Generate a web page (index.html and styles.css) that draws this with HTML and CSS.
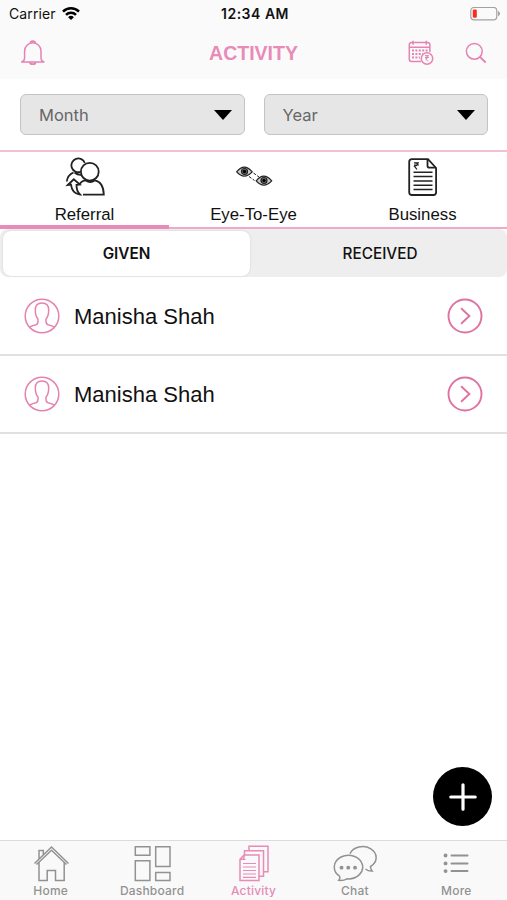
FILE: index.html
```html
<!DOCTYPE html>
<html lang="en">
<head>
  <meta charset="UTF-8" />
  <title>Activity</title>
  <meta name="viewport" content="width=device-width, initial-scale=1" />
  <link rel="stylesheet" href="styles.css">
</head>
<body>

  <header class="top">
    <div class="status-bar">
      <div class="carrier">
        <span>Carrier</span>
        <svg width="18" height="14" viewBox="0 0 18 14" aria-hidden="true">
          <path d="M1 4.600a11.400 11.400 0 0 1 16 0M4 7.800a7 7 0 0 1 10 0" fill="none" stroke="#000" stroke-width="2.500"/>
          <path d="M9 13.100L6.100 10.200a4.100 4.100 0 0 1 5.800 0Z"/>
        </svg>
      </div>
      <strong class="clock">12:34 AM</strong>
      <svg class="battery" width="31" height="14" viewBox="0 0 31 14" aria-hidden="true">
        <rect x=".8" y=".4" width="26" height="12.400" rx="3.400" fill="none" stroke="#a2a2a2" stroke-width="1.200"/>
        <rect x="2.800" y="2.400" width="4" height="8.400" rx="1.200" fill="#fb2b1d"/>
        <path d="M28 3.800q4 2.800 0 5.600Z" fill="#a2a2a2"/>
      </svg>
    </div>

    <div class="title-bar">
      <svg class="bell" width="26" height="26" viewBox="0 0 26 26" aria-hidden="true">
        <path d="M1.200 22q3.400-.6 3.400-4.500v-6.500a8.200 8.200 0 0 1 16.400 0v6.500q0 3.900 3.400 4.500Z"/>
        <path d="M10.500 3.200a2.300 2 0 0 1 4.600 0M10 22.200a2.800 2 0 0 0 5.600 0" stroke-width="1.800"/>
      </svg>
      <h1>ACTIVITY</h1>
      <div class="title-actions">
        <svg width="26" height="26" viewBox="0 0 26 26" aria-hidden="true">
          <path d="M13 21.500H3.500a2.200 2.200 0 0 1-2.200-2.200V4.700a2.200 2.200 0 0 1 2.200-2.200h16.200a2.200 2.200 0 0 1 2.200 2.200V12M1.300 7.300H22M5 .8v4M18.300 .8v4"/>
          <path d="M4 10.500h16M4 14h11M4 17.500h8" stroke-width="2" stroke-dasharray="2 1.400"/>
          <circle cx="19" cy="18.500" r="5.700"/>
          <path d="M17 15.700h4M17 17.500h4M17.500 15.700q3.500.2 2.200 2.200l-2 .8 2 2.700" stroke-width="1"/>
        </svg>
        <svg width="22" height="22" viewBox="0 0 22 22" aria-hidden="true">
          <circle cx="9.300" cy="9.300" r="7.900"/>
          <path d="M15 15l5.700 5.500" stroke-width="1.800"/>
        </svg>
      </div>
    </div>
  </header>

  <main>
    <!-- Filters -->
    <section class="filters">
      <div class="select">
        <span>Month</span>
        <svg width="18" height="10" viewBox="0 0 18 10" aria-hidden="true"><path d="M0 0h18L9 10Z"/></svg>
      </div>
      <div class="select">
        <span>Year</span>
        <svg width="18" height="10" viewBox="0 0 18 10" aria-hidden="true"><path d="M0 0h18L9 10Z"/></svg>
      </div>
    </section>

    <!-- Activity types -->
    <nav class="tabs">
      <a class="tab active">
        <svg width="40" height="40" viewBox="0 0 40 40" aria-hidden="true">
          <circle cx="24.800" cy="14.700" r="8.900"/>
          <path d="M15.500 14.900A6.900 6.900 0 1 1 19.800 6M1.800 24.500Q2.500 18 8.500 15.500M9.500 15.500q3 2.600 7 2.300M14.500 27q3-3.700 6-3.700 4.800 3.400 9.500 0Q38.500 25 38.800 37.700H18"/>
          <path d="M2.800 28l6-5.700 6 5.200-3.300.3q-.2 6.200 3.500 9.700-8-.7-9-9.800Z"/>
        </svg>
        <span>Referral</span>
      </a>
      <a class="tab">
        <svg width="40" height="40" viewBox="0 0 40 40" aria-hidden="true">
          <g id="eye">
            <path d="M2.700 14.800q7.500-9.500 15.500 0-8 8.500-15.500 0Z" fill="#ccc" stroke-width="1.200"/>
            <circle cx="10.500" cy="14.500" r="3" fill="#777" stroke-width="1.200"/>
            <circle cx="10.500" cy="14.500" r="1.700" fill="#000" stroke="none"/>
          </g>
          <use href="#eye" x="19.500" y="9"/>
          <path d="M19.500 16l5.500 4M15 19.500l5.500 4" stroke-width="1" stroke-dasharray="3 1.500"/>
        </svg>
        <span>Eye-To-Eye</span>
      </a>
      <a class="tab">
        <svg width="40" height="40" viewBox="0 0 40 40" aria-hidden="true">
          <path d="M25 2.200H9a2.800 2.800 0 0 0-2.800 2.800v30.200A2.800 2.800 0 0 0 9 38h21.300a2.800 2.800 0 0 0 2.800-2.800V11Z"/>
          <path d="M24.500 2.500v6.200a2 2 0 0 0 2 2H33"/>
          <path d="M10.500 15.300h19M10.500 19.600h19M10.500 23.900h19M10.500 28.200h19M10.500 32.500h19" stroke-width="1.500"/>
          <path d="M11 5.800h5M11 8h5M11.500 5.800q4.500.3 2.100 2.700l-2.200.7 2.600 3.300" stroke-width="1.200"/>
        </svg>
        <span>Business</span>
      </a>
    </nav>

    <div class="segments">
      <button class="segment selected">GIVEN</button>
      <button class="segment">RECEIVED</button>
    </div>

    <ul class="people">
      <li class="person">
        <svg width="36" height="36" viewBox="0 0 36 36" aria-hidden="true">
          <circle cx="18" cy="18" r="16.800"/>
          <path d="M5.500 29.200q2-1.500 6.500-2.500 2.500-.8 2-5.700Q11.300 18 11.300 12q0-7 6.700-7t6.700 7q0 6-2.700 9-.5 4.900 2 5.700 4.500 1 6.500 2.500"/>
        </svg>
        <span class="name">Manisha Shah</span>
        <svg class="go" width="36" height="36" viewBox="0 0 36 36" aria-hidden="true">
          <circle cx="18" cy="18" r="16.500"/>
          <path d="M14.600 10.700l7.800 7.300-7.800 7.300" stroke-linecap="round"/>
        </svg>
      </li>
      <li class="person">
        <svg width="36" height="36" viewBox="0 0 36 36" aria-hidden="true">
          <circle cx="18" cy="18" r="16.800"/>
          <path d="M5.500 29.200q2-1.500 6.500-2.500 2.500-.8 2-5.700Q11.300 18 11.300 12q0-7 6.700-7t6.700 7q0 6-2.700 9-.5 4.900 2 5.700 4.500 1 6.500 2.500"/>
        </svg>
        <span class="name">Manisha Shah</span>
        <svg class="go" width="36" height="36" viewBox="0 0 36 36" aria-hidden="true">
          <circle cx="18" cy="18" r="16.500"/>
          <path d="M14.600 10.700l7.800 7.300-7.800 7.300" stroke-linecap="round"/>
        </svg>
      </li>
    </ul>
  </main>

  <button class="add-btn" aria-label="Add">
    <svg width="28" height="28" viewBox="0 0 28 28"><path d="M14 1.800v24.400M1.800 14h24.400" stroke="#fff" stroke-width="3.200" stroke-linecap="round"/></svg>
  </button>

  <nav class="bottom-nav">
    <a class="nav-item">
      <svg width="44" height="38" viewBox="0 0 44 38" aria-hidden="true">
        <path d="M5.500 19.500L22.500 3l17 16.500M7.500 20.500l15-14.300 15 14.300M10 15V6.500h4.300V11M10 18.500v18h8.200v-10h8.300v10h8.700v-18"/>
      </svg>
      <span>Home</span>
    </a>
    <a class="nav-item">
      <svg width="44" height="38" viewBox="0 0 44 38" aria-hidden="true">
        <path d="M5.300 2.700h14.600v8.600H5.300ZM5.300 16.700h14.600v19.800H5.300ZM25.700 2.700h14.300v19.800H25.700ZM25.700 28.500h14.300v8H25.700Z"/>
      </svg>
      <span>Dashboard</span>
    </a>
    <a class="nav-item current">
      <svg width="44" height="38" viewBox="0 0 44 38" aria-hidden="true">
        <path d="M12 11h15v25.500H8V15.200ZM12 11v4.200H8M12.500 10.700V6.800h19v25.500H27.300M17 6.500V2.300h19v25.500h-4"/>
        <path d="M11 15.500h2.500M11 19.500h13M11 23h13M11 26.500h13M11 30h13M11 33.300h13" stroke-width="1.200"/>
      </svg>
      <span>Activity</span>
    </a>
    <a class="nav-item">
      <svg width="44" height="38" viewBox="0 0 44 38" aria-hidden="true">
        <path d="M6.500 32.200A14.200 11.800 0 1 1 14 34.800q-3.500 2-8.200 1.500Q7.500 34.300 6.500 32.200ZM17 9.700A13.500 11 0 1 1 37.500 22.500q0 2.700 1.700 4.500-3.900.3-6.700-2"/>
        <path d="M8.500 23.700h.1M15.200 23.700h.1M22 23.700h.1" stroke-width="3.800" stroke-linecap="round"/>
      </svg>
      <span>Chat</span>
    </a>
    <a class="nav-item">
      <svg width="44" height="38" viewBox="0 0 44 38" aria-hidden="true">
        <path d="M17.500 11.500h16M17.500 19.400h16M17.500 27.100h16" stroke-width="2" stroke-linecap="round"/>
        <path d="M11.500 11.500h.1M11.500 19.400h.1M11.500 27.100h.1" stroke-width="3.800" stroke-linecap="round"/>
      </svg>
      <span>More</span>
    </a>
  </nav>

</body>
</html>
```

FILE: styles.css
```css
* { box-sizing: border-box; }

body {
  margin: 0;
  height: 900px;
  display: flex;
  flex-direction: column;
  position: relative;
  overflow: hidden;
  background: #fff;
  color: #111;
  font-family: "Liberation Sans", Arial, sans-serif;
}
svg { display: block; flex: none; }
button { border: none; padding: 0; font-family: inherit; }

/* ===== HEADER ===== */
.top { height: 79px; background: #fafafa; }

.status-bar {
  height: 27px;
  padding: 0 6px 0 9px;
  display: grid;
  grid-template-columns: 1fr auto 1fr;
  align-items: center;
  font-family: Inter, sans-serif;
  font-size: 14px;
}
.carrier { display: flex; align-items: center; gap: 6px; letter-spacing: .1px; }
.clock { font-weight: 600; letter-spacing: .5px; }
.battery { justify-self: end; }

.title-bar {
  height: 52px;
  padding: 0 20px 0 20px;
  display: grid;
  grid-template-columns: 1fr auto 1fr;
  align-items: center;
}
.title-bar svg { fill: none; stroke: #e583b2; stroke-width: 1.5; }
.title-bar h1 {
  margin: 0;
  color: #e88bb8;
  font-size: 19.5px;
  font-weight: 700;
}
.title-actions { display: flex; align-items: center; justify-content: flex-end; gap: 31px; }

/* ===== FILTERS ===== */
.filters {
  height: 71px;
  padding: 15px 19px 0 20px;
  display: flex;
  gap: 19px;
}
.select {
  flex: 1;
  height: 41px;
  padding: 0 12px 0 18px;
  display: flex;
  align-items: center;
  justify-content: space-between;
  border: 1.5px solid #c4c4c4;
  border-radius: 6px;
  background: #e6e6e6;
  color: #666;
  font-family: Inter, sans-serif;
  font-size: 16.5px;
}

/* ===== TABS ===== */
.tabs {
  height: 79px;
  display: flex;
  align-items: stretch;
  border-top: 2px solid #f3c1d6;
}
.tab {
  flex: 1;
  padding-top: 5px;
  display: flex;
  flex-direction: column;
  align-items: center;
  gap: 8px;
  border-bottom: 2px solid #efaac9;
  font-size: 16.8px;
  line-height: 19px;
}
.tab.active { border-bottom: 4px solid #e88bb8; }
.tab svg { fill: none; stroke: #222; stroke-width: 1.8; }

.segments {
  height: 48px;
  padding: 2px 0 1px 3px;
  display: flex;
  border-radius: 8px;
  background: #eee;
}
.segment {
  flex: 1;
  padding-left: 3px;
  background: none;
  color: #111;
  font-family: Inter, sans-serif;
  font-size: 15.3px;
  font-weight: 500;
}
.segment.selected {
  flex: 0 0 247px;
  padding-left: 0;
  border-radius: 8px;
  background: #fff;
  font-weight: 600;
  box-shadow: 0 0 2px rgba(0,0,0,0.15);
}

/* ===== LIST ===== */
.people { margin: 0; padding: 1px 0 0; list-style: none; }
.person {
  height: 78px;
  padding: 0 24px;
  display: flex;
  align-items: center;
  border-bottom: 2px solid #e0e0e0;
}
.person svg { fill: none; stroke: #e583b0; stroke-width: 1.5; }
.person .go { stroke: #e072a0; stroke-width: 1.9; }
.name { flex: 1; margin-left: 14px; padding-top: 2px; font-size: 22px; }

.add-btn {
  position: absolute;
  right: 15px;
  bottom: 74px;
  width: 59px;
  height: 59px;
  display: flex;
  align-items: center;
  justify-content: center;
  border-radius: 50%;
  background: #000;
}

/* ===== BOTTOM NAV ===== */
.bottom-nav {
  height: 60px;
  margin-top: auto;
  display: flex;
  border-top: 1px solid #dcdcdc;
  background: #f9f9f9;
}
.nav-item {
  flex: 1;
  padding-top: 3px;
  display: flex;
  flex-direction: column;
  align-items: center;
  gap: 1px;
  color: #929292;
  font-family: Inter, sans-serif;
  font-size: 12px;
  font-weight: 500;
  line-height: 15px;
  letter-spacing: .2px;
}
.nav-item svg { fill: none; stroke: currentColor; stroke-width: 1.5; }
.nav-item.current { color: #e88bb5; }
```
